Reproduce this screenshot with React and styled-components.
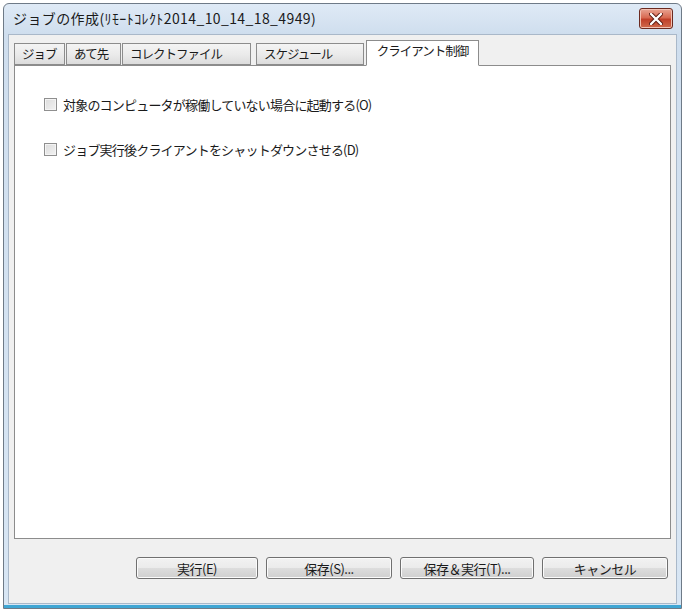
import styled, { createGlobalStyle } from "styled-components"

const GlobalStyle = createGlobalStyle`
    html, body {
        margin: 0;
        padding: 0;
        background: #ffffff;
    }
    body {
        font-family: "Noto Sans CJK JP", "Liberation Sans", sans-serif;
    }
`;

const tabs = [
    { label: "ジョブ", width: 51, offset: 0 },
    { label: "あて先", width: 55, offset: 1 },
    { label: "コレクトファイル", width: 129, offset: 1 },
    { label: "スケジュール", width: 108, offset: 5 },
    { label: "クライアント制御", width: 113, offset: 2 },
];

const options = [
    "対象のコンピュータが稼働していない場合に起動する(O)",
    "ジョブ実行後クライアントをシャットダウンさせる(D)",
];

const buttons = [
    { label: "実行(E)", width: 122 },
    { label: "保存(S)...", width: 126 },
    { label: "保存＆実行(T)...", width: 134 },
    { label: "キャンセル", width: 126 },
];

export default function App() {
    const active = 4;

    return (
        <>
            <GlobalStyle />
            <Window>
                <TitleBar>
                    <Title>ジョブの作成(ﾘﾓｰﾄｺﾚｸﾄ2014_10_14_18_4949)</Title>
                    <CloseButton aria-label="close">
                        <svg width="14" height="12" viewBox="0 0 14 12">
                            <path d="M2 1 L12 11 M12 1 L2 11" stroke="#5a1a12" strokeWidth="4.2" strokeLinecap="round" />
                            <path d="M2 1 L12 11 M12 1 L2 11" stroke="#ffffff" strokeWidth="2.4" strokeLinecap="round" />
                        </svg>
                    </CloseButton>
                </TitleBar>
                <Body>
                    <TabRow>
                        {tabs.map((t, i) => (
                            <Tab key={t.label} $active={i === active} $width={t.width} $offset={t.offset}>
                                {t.label}
                            </Tab>
                        ))}
                    </TabRow>
                    <Panel>
                        {options.map((o) => (
                            <CheckRow key={o}>
                                <CheckBox />
                                <CheckLabel>{o}</CheckLabel>
                            </CheckRow>
                        ))}
                    </Panel>
                    <Footer>
                        {buttons.map((b) => (
                            <Button key={b.label} $width={b.width}>{b.label}</Button>
                        ))}
                    </Footer>
                </Body>
            </Window>
        </>
    )
}

const Window = styled.div`
    margin: 3px 0 0 3px;
    width: 679px;
    height: 606px;
    border: 1px solid #6e7a87;
    border-radius: 6px 6px 0 0;
    background: linear-gradient(to bottom, #dfeaf6 0px, #cfdeee 30px, #d8e6f4 100%);
    box-shadow: inset 0 -3px 0 #3fa6d4;
    display: flex;
    flex-direction: column;
    padding: 0 4px 4px 4px;
    box-sizing: border-box;
`;

const TitleBar = styled.div`
    height: 30px;
    display: flex;
    align-items: center;
    justify-content: space-between;
    padding: 0 4px 0 5px;
`;

const Title = styled.div`
    font-size: 14px;
    letter-spacing: 0.4px;
    color: #1a1a1a;
    padding-bottom: 2px;
`;

const CloseButton = styled.div`
    width: 32px;
    height: 19px;
    margin-top: -1px;
    border: 1px solid #6b2a20;
    border-radius: 3px;
    background: linear-gradient(to bottom, #e8a493 0%, #d86a52 45%, #c0402a 55%, #cf6a4c 100%);
    display: flex;
    align-items: center;
    justify-content: center;
    box-shadow: inset 0 0 0 1px #f2c0b2;
`;

const Body = styled.div`
    flex: 1;
    background: #f0f0f0;
    border: 1px solid #a9b8c9;
    display: flex;
    flex-direction: column;
    padding: 5px 5px 0 5px;
`;

const TabRow = styled.div`
    display: flex;
    align-items: flex-end;
    height: 25px;
    position: relative;
    z-index: 1;
`;

const Tab = styled.div`
    width: ${(p) => p.$width}px;
    margin-left: ${(p) => p.$offset}px;
    height: ${(p) => (p.$active ? 26 : 22)}px;
    box-sizing: border-box;
    border: 1px solid #8c8c8c;
    border-bottom: ${(p) => (p.$active ? "1px solid #ffffff" : "1px solid #8c8c8c")};
    background: ${(p) => (p.$active ? "#ffffff" : "linear-gradient(to bottom, #f4f4f4 0%, #ebebeb 50%, #dcdcdc 100%)")};
    font-size: 12.5px;
    letter-spacing: -1px;
    color: #1a1a1a;
    text-align: ${(p) => (p.$active ? "center" : "left")};
    padding: ${(p) => (p.$active ? "1px 0 0 0" : "1px 0 0 7px")};
    margin-bottom: ${(p) => (p.$active ? "-1px" : "0")};
    line-height: 18px;
    white-space: nowrap;
`;

const Panel = styled.div`
    height: 474px;
    box-sizing: border-box;
    background: #ffffff;
    border: 1px solid #8c8c8c;
    padding: 28px 0 0 29px;
    display: flex;
    flex-direction: column;
    gap: 25px;
`;

const CheckRow = styled.div`
    display: flex;
    align-items: center;
    gap: 6px;
    height: 20px;
`;

const CheckBox = styled.div`
    width: 13px;
    height: 13px;
    box-sizing: border-box;
    border: 1px solid #8f8f8f;
    background: linear-gradient(135deg, #dcdcdc 0%, #f2f2f2 100%);
    box-shadow: inset 0 0 0 1px #f4f4f4;
`;

const CheckLabel = styled.span`
    font-size: 13px;
    color: #1a1a1a;
    letter-spacing: -0.8px;
`;

const Footer = styled.div`
    display: flex;
    justify-content: flex-end;
    gap: 8px;
    padding: 18px 3px 0 0;
`;

const Button = styled.div`
    width: ${(p) => p.$width}px;
    height: 22px;
    box-sizing: border-box;
    border: 1px solid #707070;
    border-radius: 3px;
    background: linear-gradient(to bottom, #f2f2f2 0%, #ebebeb 50%, #dddddd 51%, #cfcfcf 100%);
    box-shadow: inset 0 0 0 1px #fbfbfb;
    display: flex;
    align-items: center;
    justify-content: center;
    font-size: 13px;
    letter-spacing: -0.5px;
    color: #1a1a1a;
`;
